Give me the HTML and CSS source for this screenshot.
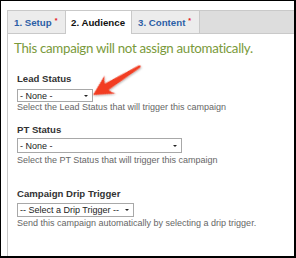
FILE: index.html
```html
<!DOCTYPE html>
<html lang="en">
<head>
    <meta charset="UTF-8">
    <title>Campaign - Audience</title>
    <link rel="stylesheet" href="styles.css">
</head>
<body>
    <div class="frame">
        <div class="panel">
            <div class="tabs">
                <div class="tab tab-setup">1. Setup<span class="req">*</span></div>
                <div class="tab tab-audience active">2. Audience</div>
                <div class="tab tab-content">3. Content<span class="req">*</span></div>
                <div class="tab-fill"></div>
            </div>

            <p class="notice">This campaign will not assign automatically.</p>

            <div class="field field-lead">
                <label>Lead Status</label>
                <div class="select select-lead"><span>- None -</span><i class="caret"></i></div>
                <p class="help">Select the Lead Status that will trigger this campaign</p>
            </div>

            <div class="field field-pt">
                <label>PT Status</label>
                <div class="select select-pt"><span>- None -</span><i class="caret"></i></div>
                <p class="help">Select the PT Status that will trigger this campaign</p>
            </div>

            <div class="field field-drip">
                <label>Campaign Drip Trigger</label>
                <div class="select select-drip"><span>-- Select a Drip Trigger --</span><i class="caret"></i></div>
                <p class="help">Send this campaign automatically by selecting a drip trigger.</p>
            </div>
        </div>

        <!-- annotation arrow -->
        <svg class="arrow" width="296" height="258" viewBox="0 0 296 258">
            <defs>
                <filter id="shadow" x="-20%" y="-20%" width="140%" height="140%">
                    <feDropShadow dx="0" dy="1" stdDeviation="0.8" flood-color="#000" flood-opacity="0.35"/>
                </filter>
            </defs>
            <g transform="translate(92 94) rotate(-31.5)" filter="url(#shadow)">
                <path d="M0 0 L20 -10.5 Q16.5 -6.5 16 -3.4 L55 -1.3 Q56.5 0 55 1.3 L16 3.8 Q16.5 7 20 10.5 Z" fill="#f23c22"/>
            </g>
        </svg>
    </div>
</body>
</html>
```

FILE: styles.css
```css
:root {
    --tab-bg: #ececec;
    --tab-fill: #dddddd;
    --line: #c9c9c9;
    --tab-link: #2c5fa6;
    --notice: #7a9a3b;
    --help: #666666;
}

* {
    box-sizing: border-box;
}

body {
    margin: 0;
    background: #ffffff;
    font-family: 'Liberation Sans', Arial, sans-serif;
}

.frame {
    position: relative;
    width: 296px;
    height: 258px;
    border-style: solid;
    border-color: #000;
    border-width: 1px 2px 2px 1px;
    padding: 9px 0 0 6px;
    background: #fff;
    overflow: hidden;
}

.panel {
    height: 100%;
    border-left: 1px solid var(--line);
}

/* tabs */
.tabs {
    display: flex;
    height: 24px;
    border-top: 1px solid var(--line);
    border-bottom: 1px solid var(--line);
    background: var(--tab-fill);
}

.tab {
    display: flex;
    align-items: center;
    padding-left: 6px;
    font-size: 9.7px;
    font-weight: bold;
    color: var(--tab-link);
    background: var(--tab-bg);
    border-right: 1px solid var(--line);
}

.tab-setup {
    width: 58px;
}

.tab-audience {
    width: 66px;
    padding-left: 5px;
}

.tab-content {
    width: 68px;
}

.tab.active {
    background: #fff;
    color: #111;
    height: 23px;
    margin-bottom: -1px;
}

.tab-fill {
    flex: 1;
}

.req {
    color: #e4161b;
    font-size: 7px;
    margin-left: 3px;
    align-self: flex-start;
    margin-top: 6px;
}

/* notice */
.notice {
    margin: 6px 0 0 6px;
    font-family: Lato, 'Open Sans', sans-serif;
    font-size: 13.3px;
    letter-spacing: -0.3px;
    line-height: 16px;
    color: var(--notice);
    white-space: nowrap;
}

/* fields */
.field {
    padding-left: 9px;
}

.field label {
    display: block;
    font-size: 9.6px;
    line-height: 11px;
    font-weight: bold;
    color: #333;
}

.select {
    display: flex;
    align-items: center;
    justify-content: space-between;
    height: 13px;
    padding: 0 4px 0 2px;
    border: 1px solid #a8a8a8;
    background: #fff;
    font-size: 9px;
    color: #222;
}

.caret {
    width: 0;
    height: 0;
    border-left: 2px solid transparent;
    border-right: 2px solid transparent;
    border-top: 2px solid #222;
}

.help {
    margin: 0;
    font-size: 9px;
    line-height: 10px;
    color: var(--help);
    white-space: nowrap;
}

.field-lead {
    margin-top: 17px;
}
.select-lead {
    width: 76px;
    margin-top: 5px;
}

.field-pt {
    margin-top: 12px;
}
.select-pt {
    width: 165px;
    height: 15px;
    margin-top: 3px;
}
.field-pt .help {
    margin-top: 2px;
}

.field-drip {
    margin-top: 23px;
}
.select-drip {
    width: 117px;
    height: 14px;
    margin-top: 4px;
}
.field-drip .help {
    margin-top: 1px;
}

.arrow {
    position: absolute;
    left: 0;
    top: 0;
    pointer-events: none;
}
```
